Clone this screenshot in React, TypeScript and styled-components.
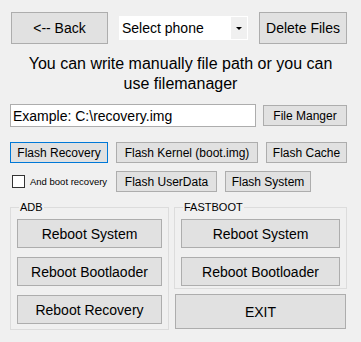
import React from 'react';
import styled, { createGlobalStyle } from 'styled-components';

const GlobalStyle = createGlobalStyle`
  html, body {
    margin: 0;
    padding: 0;
    background: #f0f0f0;
  }
  * {
    box-sizing: border-box;
  }
`;

const Window = styled.div`
  width: 361px;
  height: 342px;
  background: #f0f0f0;
  font-family: 'Liberation Sans', Arial, sans-serif;
  color: #000;
  display: flex;
  flex-direction: column;
  overflow: hidden;
`;

const Row = styled.div<{ $top: number; $left: number; $gap: number }>`
  display: flex;
  align-items: center;
  margin-top: ${(p) => p.$top}px;
  padding-left: ${(p) => p.$left}px;
  gap: ${(p) => p.$gap}px;
`;

const Button = styled.button<{ $w: number; $h: number; $size?: number; $focused?: boolean }>`
  width: ${(p) => p.$w}px;
  height: ${(p) => p.$h}px;
  margin: 0;
  padding: 0;
  flex: none;
  background: #e1e1e1;
  border: 1px solid ${(p) => (p.$focused ? '#0078d7' : '#adadad')};
  font-family: 'Liberation Sans', Arial, sans-serif;
  font-size: ${(p) => p.$size ?? 14}px;
  color: #000;
  cursor: pointer;
  white-space: nowrap;
`;

const SelectBox = styled.div`
  width: 129px;
  height: 24px;
  flex: none;
  display: flex;
  background: #fff;
  border: 1px solid #fff;
  font-size: 14px;
`;

const SelectText = styled.span`
  flex: 1;
  display: flex;
  align-items: center;
  padding-left: 2px;
`;

const SelectArrow = styled.span`
  width: 16px;
  display: flex;
  align-items: center;
  justify-content: center;
  background: #f0f0f0;
`;

const Arrow = styled.span`
  width: 0;
  height: 0;
  border-left: 3px solid transparent;
  border-right: 3px solid transparent;
  border-top: 3px solid #000;
`;

const Caption = styled.p`
  margin: 10px 0 0;
  padding-left: 0;
  text-align: center;
  font-size: 16px;
  line-height: 20px;
`;

const PathInput = styled.input`
  width: 246px;
  height: 23px;
  flex: none;
  margin: 0;
  padding: 0 2px;
  border: 1px solid #adadad;
  background: #fff;
  font-family: 'Liberation Sans', Arial, sans-serif;
  font-size: 14px;
  color: #000;
  outline: none;
`;

const CheckLabel = styled.label`
  width: 98px;
  flex: none;
  display: flex;
  align-items: center;
  gap: 5px;
  padding-left: 2px;
  font-size: 9.5px;
`;

const CheckBox = styled.span`
  width: 13px;
  height: 13px;
  flex: none;
  border: 1px solid #333;
  background: #fff;
`;

const Groups = styled.div`
  display: flex;
  align-items: flex-start;
  gap: 5px;
  margin-top: 9px;
  padding-left: 10px;
`;

const Column = styled.div`
  display: flex;
  flex-direction: column;
  align-items: flex-start;
  gap: 5px;
`;

const Group = styled.fieldset<{ $w: number; $bottom: number }>`
  width: ${(p) => p.$w}px;
  margin: 0;
  padding: 5px 6px ${(p) => p.$bottom}px;
  border: 1px solid #dcdcdc;
  display: flex;
  flex-direction: column;
  gap: 9px;
`;

const Legend = styled.legend`
  margin-left: 2px;
  padding: 0 1px;
  font-size: 11px;
  line-height: 13px;
`;

const ExitButton = styled(Button)`
  margin-left: 1px;
`;

export default function App() {
  return (
    <>
      <GlobalStyle />
      <Window>
        <Row $top={12} $left={11} $gap={11}>
          <Button $w={97} $h={32}>&lt;-- Back</Button>
          <SelectBox>
            <SelectText>Select phone</SelectText>
            <SelectArrow>
              <Arrow />
            </SelectArrow>
          </SelectBox>
          <Button $w={88} $h={32}>Delete Files</Button>
        </Row>
        <Caption>
          You can write manually file path or you can
          <br />
          use filemanager
        </Caption>
        <Row $top={10} $left={10} $gap={7}>
          <PathInput defaultValue="Example: C:\recovery.img" />
          <Button $w={84} $h={21} $size={12}>File Manger</Button>
        </Row>
        <Row $top={15} $left={10} $gap={8}>
          <Button $w={98} $h={21} $size={12} $focused>Flash Recovery</Button>
          <Button $w={142} $h={21} $size={12}>Flash Kernel (boot.img)</Button>
          <Button $w={81} $h={21} $size={12}>Flash Cache</Button>
        </Row>
        <Row $top={8} $left={10} $gap={8}>
          <CheckLabel>
            <CheckBox />
            And boot recovery
          </CheckLabel>
          <Button $w={101} $h={21} $size={12}>Flash UserData</Button>
          <Button $w={86} $h={21} $size={12}>Flash System</Button>
        </Row>
        <Groups>
          <Group $w={159} $bottom={5}>
            <Legend>ADB</Legend>
            <Button $w={145} $h={29}>Reboot System</Button>
            <Button $w={145} $h={29}>Reboot Bootlaoder</Button>
            <Button $w={145} $h={29}>Reboot Recovery</Button>
          </Group>
          <Column>
            <Group $w={173} $bottom={2}>
              <Legend>FASTBOOT</Legend>
              <Button $w={159} $h={29}>Reboot System</Button>
              <Button $w={159} $h={29}>Reboot Bootloader</Button>
            </Group>
            <ExitButton $w={171} $h={35}>EXIT</ExitButton>
          </Column>
        </Groups>
      </Window>
    </>
  );
}
